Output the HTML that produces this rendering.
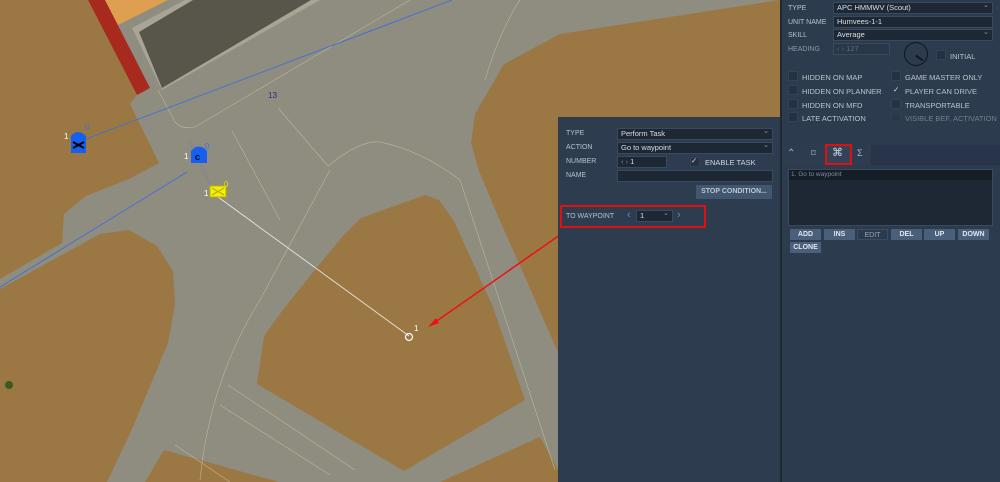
<!DOCTYPE html>
<html><head><meta charset="utf-8"><style>
*{margin:0;padding:0;box-sizing:border-box}
body{width:1000px;height:482px;overflow:hidden;position:relative;background:#8f8c80;font-family:"Liberation Sans",sans-serif;font-size:7px;color:#c9d1da}
.a{position:absolute}
.lbl{position:absolute;font-size:7px;color:#b8c2cc}
.fld{position:absolute;background:#1e2835;border:1px solid #3a4a5e;color:#d8dee6;font-size:7.5px;padding-left:3px;line-height:10px;height:12px}
.dd::after{content:"⌄";position:absolute;right:3px;top:-2px;font-size:7px;color:#8b97a5}
.cb{position:absolute;width:10px;height:10px;background:#253242;border:1px solid #33425a}
.ck{position:absolute;font-size:7.5px;color:#b8c2cc}
.btn{position:absolute;background:#4a5f7a;color:#dfe6ee;font-size:7px;font-weight:bold;text-align:center;line-height:11px;height:11px}
</style></head><body>
<svg class="a" style="left:0;top:0" width="780" height="482" viewBox="0 0 780 482">
<rect width="780" height="482" fill="#8f8c80"/>
<polygon fill="#9b7843" points="0,0 88,0 137,95 130,104 159,163 129,179 86,196 64,214 62,243 0,279"/>
<polygon fill="#9b7843" points="0,289 100,234 129,230 157,246 173,271 175,304 168,343 150,386 132,429 107,482 0,482"/>
<polygon fill="#9b7843" points="504,64 560,34 780,0 780,482 560,482 560,357 529,286 500,221 479,171 471,143 475,114"/>
<polygon fill="#9b7843" points="361,218 425,195 439,200 454,221 493,307 525,400 404,471 257,384 264,336 282,311 314,271 343,236"/>
<polygon fill="#9b7843" points="164,450 279,482 145,482"/>
<polygon fill="#9b7843" points="440,482 540,437 558,470 558,482"/>
<polygon fill="#a82a1e" points="88,0 105,0 150,88 137,95"/>
<polygon fill="#dea050" points="105,0 168,0 118,25"/>
<polygon fill="#a8a597" points="132,28 185,0 320,0 162,90"/>
<polygon fill="#58554a" points="139,32 193,0 311,0 162,88"/>
<g fill="none" stroke="#c8c3a0" stroke-width="0.6" opacity="0.8">
<path d="M158,90 L175,122 Q182,130 195,127 L410,0"/>
<path d="M232,131 L280,220"/>
<path d="M278,108 L328,166"/>
<path d="M328,166 Q360,140 380,142 Q420,150 460,180 L555,470"/>
<path d="M200,480 Q210,380 260,300 L330,170"/>
<path d="M228,385 L355,470 M220,405 L330,475 M175,445 L230,482"/>
<path d="M520,0 Q500,30 485,80"/>
</g>
<line x1="86" y1="139" x2="452" y2="0" stroke="#3f6ed8" stroke-width="0.9"/>
<line x1="0" y1="287" x2="187" y2="172" stroke="#3f6ed8" stroke-width="0.9"/>
<line x1="218" y1="197" x2="409" y2="336" stroke="#eee" stroke-width="0.8"/>
<circle cx="409" cy="337" r="3.5" fill="none" stroke="#fff" stroke-width="1.2"/>
<text x="414" y="331" font-size="8" fill="#fff" font-family="Liberation Sans">1</text>
<text x="268" y="98" font-size="8" fill="#2b2b80" font-family="Liberation Sans">13</text>
<polygon fill="#888" opacity=".7" points="188,142 192,140 212,185 209,186"/>
<path d="M71,153 L71,136 Q78,128 86,136 L86,153 Z" fill="#1560f0"/>
<path d="M73,142 L84,148 M73,148 L84,142" stroke="#000" stroke-width="2"/>
<text x="64" y="139" font-size="8" fill="#fff">1</text><text x="85" y="130" font-size="8" fill="#3a6ef0">0</text>
<path d="M191,163 L191,151 Q199,142 207,151 L207,163 Z" fill="#1560f0"/>
<text x="195" y="160" font-size="7" font-weight="bold" fill="#001">C</text>
<text x="184" y="159" font-size="8" fill="#fff">1</text><text x="205" y="149" font-size="8" fill="#3a6ef0">0</text>
<rect x="210" y="186" width="16" height="11" fill="#f4f000" stroke="#bbb000"/>
<path d="M212,188 L224,195 M212,195 L224,188" stroke="#a09a00" stroke-width="0.8"/>
<text x="204" y="196" font-size="8" fill="#fff">1</text><text x="224" y="187" font-size="8" fill="#e8e000">0</text>
<circle cx="9" cy="385" r="4" fill="#3c5a20"/>
<line x1="567" y1="230" x2="431" y2="325" stroke="#ee1111" stroke-width="1.5"/>
<polygon fill="#ee1111" points="428,327 436,318 439,323"/>
</svg>
<!-- middle panel -->
<div class="a" style="left:558px;top:117px;width:222px;height:365px;background:#2e3c50"></div>
<div class="lbl" style="left:566px;top:130px">TYPE</div>
<div class="fld dd" style="left:617px;top:128px;width:156px">Perform Task</div>
<div class="lbl" style="left:566px;top:144px">ACTION</div>
<div class="fld dd" style="left:617px;top:142px;width:156px">Go to waypoint</div>
<div class="lbl" style="left:566px;top:158px">NUMBER</div>
<div class="fld" style="left:617px;top:156px;width:50px"><span style="color:#7c8898">‹ ›</span> 1</div>
<div class="cb" style="left:690px;top:157px"></div><div class="ck" style="left:691px;top:156px;color:#ddd">✓</div>
<div class="ck" style="left:705px;top:158px;color:#d0d8e0">ENABLE TASK</div>
<div class="lbl" style="left:566px;top:172px">NAME</div>
<div class="fld" style="left:617px;top:170px;width:156px"></div>
<div class="btn" style="left:696px;top:185px;width:76px;height:14px;line-height:14px;background:#42566f;color:#b9c6d4">STOP CONDITION...</div>
<div class="a" style="left:560px;top:205px;width:146px;height:23px;border:2px solid #e01010"></div>
<div class="lbl" style="left:566px;top:213px">TO WAYPOINT</div>
<div class="a" style="left:627px;top:209px;color:#4f8fd0;font-size:11px">‹</div>
<div class="fld dd" style="left:636px;top:210px;width:37px">1</div>
<div class="a" style="left:677px;top:209px;color:#4f8fd0;font-size:11px">›</div>
<!-- right panel -->
<div class="a" style="left:780px;top:0;width:220px;height:482px;background:#2d3b4f;border-left:2px solid #1f2936"></div>
<div class="lbl" style="left:788px;top:5px">TYPE</div>
<div class="fld dd" style="left:833px;top:2px;width:160px">APC HMMWV (Scout)</div>
<div class="lbl" style="left:788px;top:19px">UNIT NAME</div>
<div class="fld" style="left:833px;top:16px;width:160px">Humvees-1-1</div>
<div class="lbl" style="left:788px;top:32px">SKILL</div>
<div class="fld dd" style="left:833px;top:29px;width:160px">Average</div>
<div class="lbl" style="left:788px;top:46px;color:#8d98a5">HEADING</div>
<div class="fld" style="left:833px;top:43px;width:57px;background:#2a3749;color:#5f6c7c"><span>‹ ›</span> 127</div>
<div class="a" style="left:904px;top:42px;width:24px;height:24px;border-radius:50%;border:1.5px solid #101820"></div>
<div class="a" style="left:915px;top:57px;width:9px;height:1.5px;background:#101820;transform:rotate(35deg)"></div>
<div class="cb" style="left:936px;top:50px"></div><div class="ck" style="left:950px;top:52px">INITIAL</div>
<div class="cb" style="left:788px;top:71px"></div><div class="ck" style="left:802px;top:73px">HIDDEN ON MAP</div>
<div class="cb" style="left:788px;top:85px"></div><div class="ck" style="left:802px;top:87px">HIDDEN ON PLANNER</div>
<div class="cb" style="left:788px;top:99px"></div><div class="ck" style="left:802px;top:101px">HIDDEN ON MFD</div>
<div class="cb" style="left:788px;top:112px"></div><div class="ck" style="left:802px;top:114px">LATE ACTIVATION</div>
<div class="cb" style="left:891px;top:71px"></div><div class="ck" style="left:905px;top:73px">GAME MASTER ONLY</div>
<div class="ck" style="left:893px;top:85px;color:#ddd">✓</div><div class="ck" style="left:905px;top:87px">PLAYER CAN DRIVE</div>
<div class="cb" style="left:891px;top:99px"></div><div class="ck" style="left:905px;top:101px">TRANSPORTABLE</div>
<div class="cb" style="left:891px;top:112px;background:#2b384a;border-color:#2f3d50"></div><div class="ck" style="left:905px;top:114px;color:#727e8c">VISIBLE BEF. ACTIVATION</div>
<div class="a" style="left:782px;top:145px;width:218px;height:20px;background:#27344a"></div>
<div class="a" style="left:782px;top:145px;width:24px;height:20px;background:#2e3c50"></div>
<div class="a" style="left:806px;top:145px;width:21px;height:20px;background:#2e3c50"></div>
<div class="a" style="left:849px;top:145px;width:22px;height:20px;background:#2e3c50"></div>
<div class="a" style="left:787px;top:148px;color:#aab5c2;font-size:10px">⌃</div>
<div class="a" style="left:811px;top:148px;color:#aab5c2;font-size:9px">⌑</div>
<div class="a" style="left:825px;top:144px;width:27px;height:21px;border:2px solid #e01010;background:#34435a"></div>
<div class="a" style="left:832px;top:146px;color:#d4dbe3;font-size:11px">⌘</div>
<div class="a" style="left:857px;top:148px;color:#aab5c2;font-size:9px">Σ</div>
<div class="a" style="left:788px;top:169px;width:205px;height:57px;background:#1e2835;border:1px solid #3a4a5e"></div>
<div class="a" style="left:789px;top:170px;width:203px;height:10px;background:#151d27;color:#7f8a98;font-size:6.5px;padding-left:2px;line-height:10px">1. Go to waypoint</div>
<div class="btn" style="left:790px;top:229px;width:31px">ADD</div>
<div class="btn" style="left:824px;top:229px;width:31px">INS</div>
<div class="btn" style="left:857px;top:229px;width:31px;background:#2c3a4e;border:1px solid #3c4c62;color:#9aa6b4;font-weight:normal">EDIT</div>
<div class="btn" style="left:891px;top:229px;width:31px">DEL</div>
<div class="btn" style="left:924px;top:229px;width:31px">UP</div>
<div class="btn" style="left:958px;top:229px;width:31px">DOWN</div>
<div class="btn" style="left:790px;top:242px;width:31px">CLONE</div>
</body></html>
